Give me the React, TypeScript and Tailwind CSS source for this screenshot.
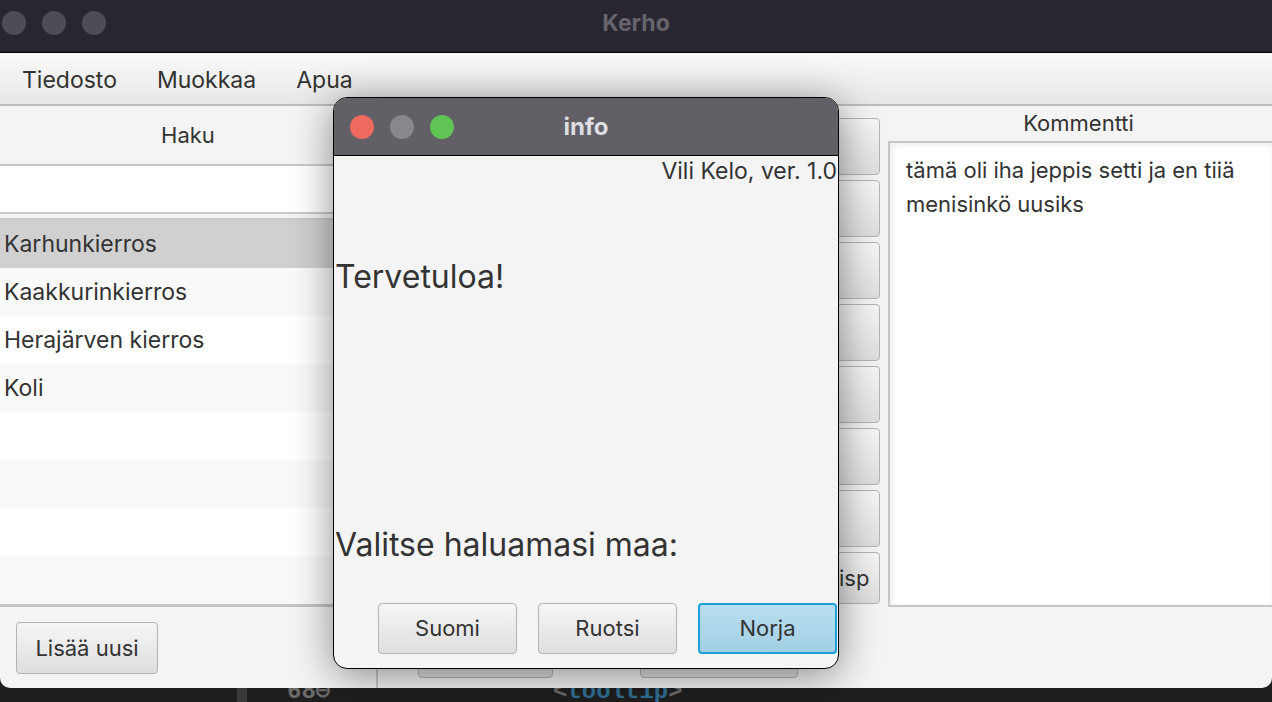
import React from "react";

const font = { fontFamily: "Inter, 'Noto Sans', 'Liberation Sans', sans-serif" };

function Btn({ children, className = "" }: { children?: React.ReactNode; className?: string }) {
  return (
    <div
      className={
        "flex items-center justify-center rounded-[4px] border-[1.5px] border-[#b4b4b4] bg-gradient-to-b from-[#f6f6f6] to-[#dedede] text-[22px] text-[#333333] " +
        className
      }
    >
      {children}
    </div>
  );
}

export default function App() {
  const rows = ["Karhunkierros", "Kaakkurinkierros", "Herajärven kierros", "Koli", "", "", "", ""];
  return (
    <div className="relative w-[1272px] h-[702px] overflow-hidden bg-[#1f1f1f]" style={font}>
      {/* main window */}
      <div className="flex h-[688px] flex-col overflow-hidden rounded-b-[10px] bg-[#f4f4f4]">
        {/* title bar */}
        <div className="relative flex h-[53px] shrink-0 items-center border-b border-black bg-[#2a2630]">
          <div className="ml-[2px] -mt-[6px] flex gap-[16px]">
            <div className="h-[24px] w-[24px] rounded-full bg-[#4f4c55]" />
            <div className="h-[24px] w-[24px] rounded-full bg-[#4f4c55]" />
            <div className="h-[24px] w-[24px] rounded-full bg-[#4f4c55]" />
          </div>
          <div className="absolute inset-x-0 top-[6px] text-center text-[23px] font-bold text-[#67646c]">Kerho</div>
        </div>
        {/* menu bar */}
        <div className="flex h-[53px] shrink-0 items-center gap-[40px] border-b-2 border-[#bdbdbd] bg-gradient-to-b from-[#f9f9f9] to-[#e8e8e8] pl-[22px] pt-[3px] text-[23px] text-[#333333]">
          <span>Tiedosto</span>
          <span>Muokkaa</span>
          <span>Apua</span>
        </div>
        {/* body */}
        <div className="flex min-h-0 flex-1">
          {/* left column */}
          <div className="flex w-[378px] shrink-0 flex-col border-r-2 border-[#c8c8c8]">
            <div className="flex h-[58px] items-center justify-center text-[22px] text-[#333333]">Haku</div>
            <div className="h-[50px] border-y-2 border-[#c8c8c8] bg-white" />
            <div className="mt-[4px] border-t-2 border-[#c8c8c8]">
              {rows.map((r, i) => (
                <div
                  key={i}
                  className={
                    "flex h-[48px] items-center pl-[4px] text-[23px] text-[#333333] " +
                    (i === 0 ? "bg-[#d0d0d0]" : i % 2 === 1 ? "bg-[#f9f9f9]" : "bg-white")
                  }
                >
                  {r}
                </div>
              ))}
            </div>
            <div className="h-[3px] bg-[#c4c4c4]" />
            <div className="flex-1 pl-[16px] pt-[15px]">
              <Btn className="h-[52px] w-[142px]">Lisää uusi</Btn>
            </div>
          </div>
          {/* middle column */}
          <div className="flex flex-1 flex-col">
            <div className="flex flex-col gap-[5px] pl-[20px] pr-[5px] pt-[12px]">
              {[0, 1, 2, 3, 4, 5, 6].map((i) => (
                <Btn key={i} className="h-[57px]" />
              ))}
              <Btn className="h-[52px] justify-end overflow-hidden pr-[10px]">
                <span className="w-[30px] overflow-hidden whitespace-nowrap">isp</span>
              </Btn>
            </div>
            <div className="mt-[16px] flex gap-[87px] pl-[40px]">
              <Btn className="h-[58px] w-[135px]" />
              <Btn className="h-[58px] w-[158px]" />
            </div>
          </div>
          {/* right column */}
          <div className="flex w-[387px] shrink-0 flex-col">
            <div className="flex h-[35px] items-center justify-center text-[22px] text-[#333333]">Kommentti</div>
            <div className="ml-[3px] h-[466px] border-2 border-r-0 border-[#c6c6c6] bg-white px-[16px] pt-[10px] text-[22px] leading-[34px] text-[#333333] shadow-[inset_2px_2px_6px_rgba(0,0,0,0.08)]">
              tämä oli iha jeppis setti ja en tiiä
              <br />
              menisinkö uusiks
            </div>
          </div>
        </div>
      </div>

      {/* code strip behind */}
      <div className="relative h-[14px] overflow-hidden bg-[#1f1f1f]">
        <div className="absolute left-[237px] top-0 h-[14px] w-[10px] bg-[#3a3a3a]" />
        <div
          className="absolute left-[287px] top-[-14px] text-[24px] font-bold text-[#6c6c6c]"
          style={{ fontFamily: "'Liberation Mono', monospace" }}
        >
          68⊖
        </div>
        <div
          className="absolute left-[553px] top-[-14px] text-[24px] font-bold"
          style={{ fontFamily: "'Liberation Mono', monospace" }}
        >
          <span className="text-[#6c6c6c]">&lt;</span>
          <span className="text-[#2f6f94]">tooltip</span>
          <span className="text-[#6c6c6c]">&gt;</span>
        </div>
      </div>

      {/* dialog */}
      <div className="absolute left-[333px] top-[97px] flex h-[572px] w-[506px] flex-col overflow-hidden rounded-[14px] border border-black bg-[#f4f4f4] shadow-[0_6px_40px_rgba(0,0,0,0.45)]">
        <div className="relative flex h-[58px] shrink-0 items-center border-b border-black bg-[#626066]">
          <div className="ml-[16px] flex gap-[16px]">
            <div className="h-[24px] w-[24px] rounded-full bg-[#ee6a5e]" />
            <div className="h-[24px] w-[24px] rounded-full bg-[#89878c]" />
            <div className="h-[24px] w-[24px] rounded-full bg-[#5fc454]" />
          </div>
          <div className="absolute inset-x-0 top-[11px] text-center text-[24px] font-bold text-[#dedde2]">info</div>
        </div>
        <div className="flex flex-1 flex-col">
          <div className="h-[30px] pr-[1px] text-right text-[23px] leading-[30px] text-[#333333]">Vili Kelo, ver. 1.0</div>
          <div className="mt-[71px] pl-[1px] text-[32px] leading-[40px] text-[#333333]">Tervetuloa!</div>
          <div className="mt-[228px] pl-[1px] text-[32px] leading-[40px] text-[#333333]">Valitse haluamasi maa:</div>
          <div className="mt-[38px] flex justify-end gap-[21px] pr-[1px]">
            <Btn className="h-[51px] w-[139px]">Suomi</Btn>
            <Btn className="h-[51px] w-[139px]">Ruotsi</Btn>
            <div className="flex h-[51px] w-[139px] items-center justify-center rounded-[4px] border-2 border-[#1ba1d8] bg-gradient-to-b from-[#b8def0] to-[#a2cfe4] text-[22px] text-[#333333]">
              Norja
            </div>
          </div>
        </div>
      </div>
    </div>
  );
}
